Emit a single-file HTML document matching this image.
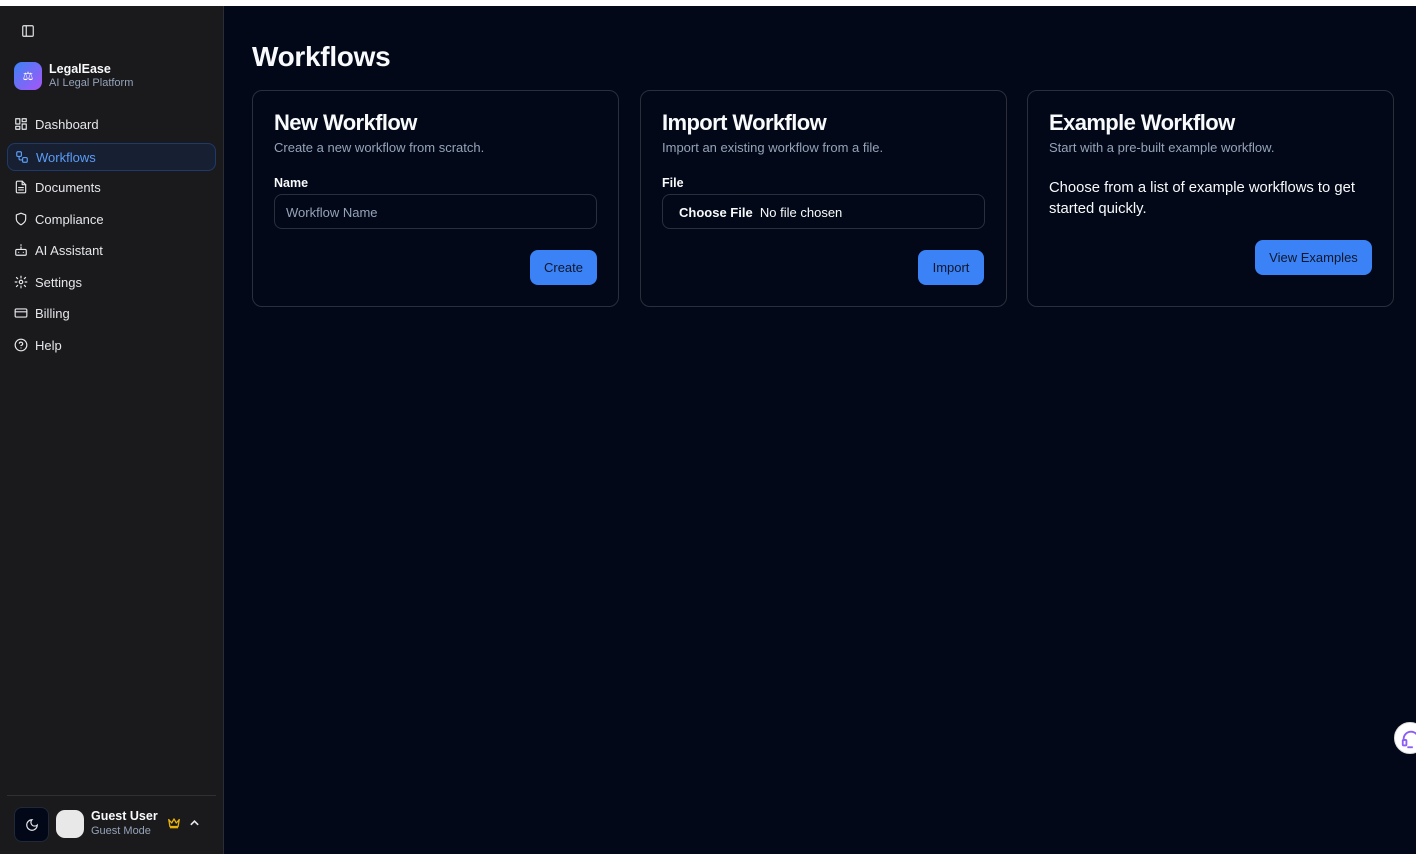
<!DOCTYPE html>
<html><head><meta charset="utf-8"><style>
*{box-sizing:border-box;margin:0;padding:0}
body{width:1416px;height:854px;overflow:hidden;background:#020817;font-family:"Liberation Sans",sans-serif;color:#f8fafc;position:relative}
.top{position:absolute;left:0;top:0;width:1416px;height:6px;background:#fff}
.side{position:absolute;left:0;top:6px;width:224px;height:848px;background:#1a1a1c;border-right:1px solid #2a2d35}
.nav{position:absolute;left:7px;width:209px;height:28px;display:flex;align-items:center;padding-left:7px;font-size:13px;color:#e5e7eb}
.nav svg{width:14px;height:14px;margin-right:7px;stroke:#e5e7eb;fill:none;stroke-width:2;stroke-linecap:round;stroke-linejoin:round}
.nav.act{background:#172033;border:1px solid #1e3a6a;border-radius:8px;color:#5b9cf6}
.nav.act svg{stroke:#5b9cf6}
.card{position:absolute;top:90px;width:367px;height:217px;border:1px solid #2a2f3b;border-radius:10px;background:#020817}
.card h2{position:absolute;left:21px;top:19px;font-size:22px;font-weight:bold;letter-spacing:-.6px}
.card .d{position:absolute;left:21px;top:49px;font-size:13px;color:#94a3b8}
.lbl{position:absolute;left:21px;top:85px;font-size:12.5px;font-weight:bold}
.inp{position:absolute;left:21px;top:103px;width:323px;height:35px;border:1px solid #2a2f3b;border-radius:8px;font-size:13px;color:#94a3b8;padding:10px 11px}
.btn{position:absolute;height:35px;background:#3b82f6;border-radius:8px;color:#0f172a;font-size:13px;display:flex;align-items:center;justify-content:center}
</style></head><body>
<div class="top"></div>
<div class="side">
<svg style="position:absolute;left:21px;top:18px" width="14" height="14" viewBox="0 0 24 24" fill="none" stroke="#e5e7eb" stroke-width="2"><rect x="3" y="3" width="18" height="18" rx="2"/><path d="M9 3v18"/></svg>
<div style="position:absolute;left:14px;top:56px;width:28px;height:28px;border-radius:8px;background:linear-gradient(135deg,#3b82f6,#a855f7);display:flex;align-items:center;justify-content:center;font-size:12px;color:#fff">⚖</div>
<div style="position:absolute;left:49px;top:56px;font-size:12.5px;font-weight:bold">LegalEase</div>
<div style="position:absolute;left:49px;top:71px;font-size:11px;color:#94a3b8">AI Legal Platform</div>
<div class="nav" style="top:104px"><svg viewBox="0 0 24 24"><rect x="3" y="3" width="7" height="9"/><rect x="14" y="3" width="7" height="5"/><rect x="14" y="12" width="7" height="9"/><rect x="3" y="16" width="7" height="5"/></svg>Dashboard</div>
<div class="nav act" style="top:137px"><svg viewBox="0 0 24 24"><rect x="3" y="3" width="8" height="8" rx="2"/><path d="M7 11v4a2 2 0 0 0 2 2h4"/><rect x="13" y="13" width="8" height="8" rx="2"/></svg>Workflows</div>
<div class="nav" style="top:167px"><svg viewBox="0 0 24 24"><path d="M14 2H6a2 2 0 0 0-2 2v16a2 2 0 0 0 2 2h12a2 2 0 0 0 2-2V8z"/><path d="M14 2v6h6M16 13H8M16 17H8"/></svg>Documents</div>
<div class="nav" style="top:199px"><svg viewBox="0 0 24 24"><path d="M12 22s8-4 8-10V5l-8-3-8 3v7c0 6 8 10 8 10z"/></svg>Compliance</div>
<div class="nav" style="top:230px"><svg viewBox="0 0 24 24"><rect x="3" y="11" width="18" height="10" rx="2"/><path d="M12 7v4M12 3v1M8 16v0M16 16v0"/></svg>AI Assistant</div>
<div class="nav" style="top:262px"><svg viewBox="0 0 24 24"><circle cx="12" cy="12" r="3"/><path d="M12 2v3M12 19v3M4.2 4.2l2.1 2.1M17.7 17.7l2.1 2.1M2 12h3M19 12h3M4.2 19.8l2.1-2.1M17.7 6.3l2.1-2.1"/></svg>Settings</div>
<div class="nav" style="top:293px"><svg viewBox="0 0 24 24"><rect x="2" y="5" width="20" height="14" rx="2"/><path d="M2 10h20"/></svg>Billing</div>
<div class="nav" style="top:325px"><svg viewBox="0 0 24 24"><circle cx="12" cy="12" r="10"/><path d="M9.1 9a3 3 0 0 1 5.8 1c0 2-3 3-3 3M12 17h0"/></svg>Help</div>
<div style="position:absolute;left:7px;top:789px;width:209px;border-top:1px solid #2e3036"></div>
<div style="position:absolute;left:14px;top:801px;width:35px;height:35px;border-radius:8px;background:#020817;border:1px solid #1f2937;display:flex;align-items:center;justify-content:center"><svg width="14" height="14" viewBox="0 0 24 24" fill="none" stroke="#e5e7eb" stroke-width="2"><path d="M12 3a6 6 0 0 0 9 9 9 9 0 1 1-9-9z"/></svg></div>
<div style="position:absolute;left:56px;top:804px;width:28px;height:28px;border-radius:9px;background:#e8e8e8"></div>
<div style="position:absolute;left:91px;top:803px;font-size:12.5px;font-weight:bold">Guest User</div>
<div style="position:absolute;left:91px;top:819px;font-size:11px;color:#94a3b8">Guest Mode</div>
<svg style="position:absolute;left:167px;top:811px" width="14" height="12" viewBox="0 0 24 20" fill="none" stroke="#eab308" stroke-width="2.2" stroke-linejoin="round"><path d="M3 4l5 6 4-7 4 7 5-6-2 12H5z"/><path d="M5 18h14"/></svg>
<svg style="position:absolute;left:189px;top:813px" width="11" height="8" viewBox="0 0 12 8" fill="none" stroke="#e5e7eb" stroke-width="1.8"><path d="M2 6l4-4 4 4"/></svg>
</div>
<div style="position:absolute;left:252px;top:41px;font-size:28px;font-weight:bold;letter-spacing:-.3px">Workflows</div>
<div class="card" style="left:252px"><h2>New Workflow</h2><div class="d">Create a new workflow from scratch.</div><div class="lbl">Name</div><div class="inp">Workflow Name</div><div class="btn" style="left:277px;top:159px;width:67px">Create</div></div>
<div class="card" style="left:640px"><h2>Import Workflow</h2><div class="d">Import an existing workflow from a file.</div><div class="lbl">File</div><div class="inp" style="color:#f8fafc"><b style="margin-left:5px">Choose File</b>&nbsp;&nbsp;No file chosen</div><div class="btn" style="left:277px;top:159px;width:66px">Import</div></div>
<div class="card" style="left:1027px"><h2>Example Workflow</h2><div class="d">Start with a pre-built example workflow.</div><div style="position:absolute;left:21px;top:87px;width:330px;font-size:14.8px;line-height:21px">Choose from a list of example workflows to get started quickly.</div><div class="btn" style="left:227px;top:149px;width:117px">View Examples</div></div>
<div style="position:absolute;left:1394px;top:722px;width:32px;height:32px;border-radius:50%;background:#fff;border:1px solid #ddd"><svg width="22" height="22" viewBox="0 0 24 24" style="position:absolute;left:5px;top:5px" fill="none" stroke="#8b5cf6" stroke-width="2"><path d="M4 14v-2a8 8 0 0 1 16 0v2"/><rect x="3" y="13" width="4" height="6" rx="1"/><path d="M8 21h6"/></svg></div>
</body></html>
